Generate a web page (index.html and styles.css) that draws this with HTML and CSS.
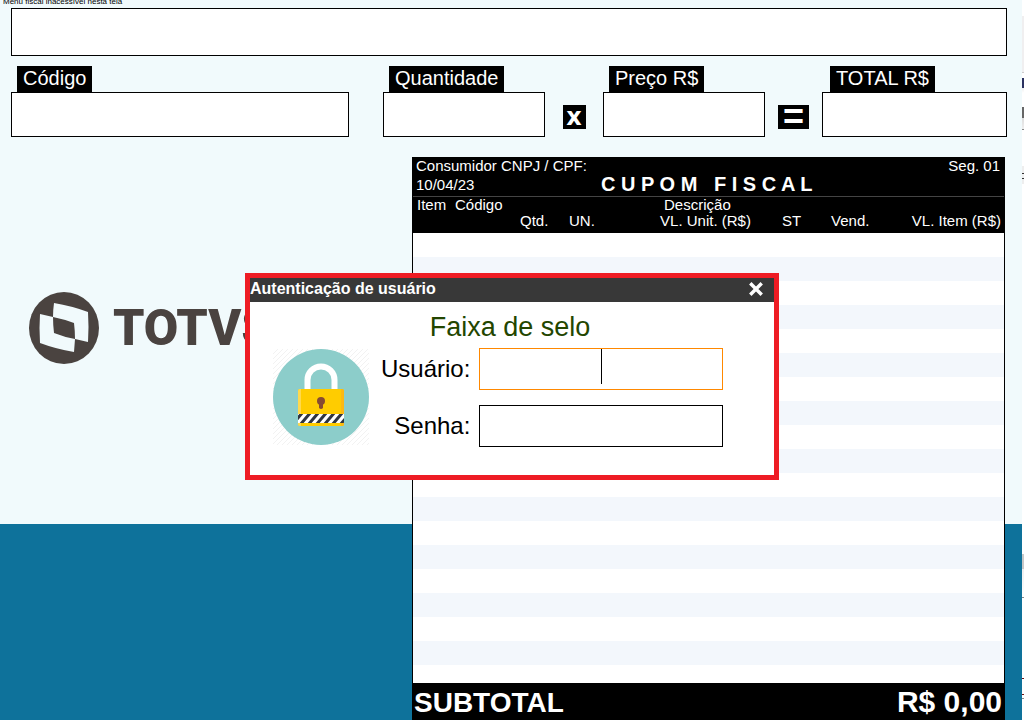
FILE: index.html
```html
<!DOCTYPE html>
<html lang="pt-BR">
<head>
  <meta charset="UTF-8" />
  <meta name="viewport" content="width=device-width, initial-scale=1.0"/>
  <title>TOTVS - Frente de Caixa</title>
  <link rel="stylesheet" href="styles.css">
</head>
<body>
  <div class="pos">
    <div class="menu-status"><span>Menu fiscal inacessível nesta tela</span></div>

    <main class="content">
      <input class="box description" type="text" aria-label="Descrição do produto" />

      <div class="fields">
        <div class="field field-code">
          <label for="codigo">Código</label>
          <input class="box" type="text" id="codigo" />
        </div>
        <div class="field">
          <label for="quantidade">Quantidade</label>
          <input class="box" type="text" id="quantidade" />
        </div>
        <div class="operator"><span class="times">x</span></div>
        <div class="field">
          <label for="preco">Preço R$</label>
          <input class="box" type="text" id="preco" />
        </div>
        <div class="operator"><span class="equals">=</span></div>
        <div class="field field-total">
          <label for="total">TOTAL R$</label>
          <input class="box" type="text" id="total" />
        </div>
      </div>

      <div class="workspace">
        <div class="brand">
          <svg class="brand-mark" viewBox="0 0 70 72" aria-hidden="true">
            <ellipse cx="35" cy="36" rx="35" ry="36" fill="#4a4340"/>
            <path d="M25 11Q43 14 59 20Q60 35 59 50L46 47Q46 39 45 31Q34 27 24 25Q24 18 25 11Z" fill="#f1fafc"/>
            <path d="M11 22L24 25Q24 33 25 41Q35 45 46 47L45 60Q27 57 11 51Q10 36 11 22Z" fill="#f1fafc"/>
          </svg>
          <span class="brand-name">TOTVS</span>
        </div>

        <section class="receipt">
          <header class="receipt-head">
            <div class="receipt-line">
              <span>Consumidor CNPJ / CPF:</span>
              <span>Seg. 01</span>
            </div>
            <div class="receipt-title">
              <span>10/04/23</span>
              <h2>C U P O M   F I S C A L</h2>
            </div>
          </header>
          <table class="items">
            <colgroup>
              <col class="c-item"><col class="c-code"><col class="c-qty"><col class="c-unit">
              <col class="c-price"><col class="c-st"><col class="c-seller"><col>
            </colgroup>
            <thead>
              <tr>
                <th>Item</th>
                <th colspan="3">Código</th>
                <th colspan="4" class="desc">Descrição</th>
              </tr>
              <tr>
                <th></th>
                <th></th>
                <th>Qtd.</th>
                <th>UN.</th>
                <th>VL. Unit. (R$)</th>
                <th>ST</th>
                <th>Vend.</th>
                <th class="right">VL. Item (R$)</th>
              </tr>
            </thead>
          </table>
          <div class="rows"></div>
          <footer class="subtotal">
            <span>SUBTOTAL</span>
            <strong>R$ 0,00</strong>
          </footer>
        </section>
      </div>
    </main>
  </div>

  <div class="overlay">
    <div class="login" role="dialog" aria-labelledby="loginTitle">
      <div class="login-bar">
        <h1 id="loginTitle">Autenticação de usuário</h1>
        <button type="button" class="close" aria-label="Fechar">
          <svg viewBox="0 0 14 14" aria-hidden="true">
            <path d="M2 2L12 12M12 2L2 12" stroke="#fff" stroke-width="3"/>
          </svg>
        </button>
      </div>
      <p class="login-message">Faixa de selo</p>
      <form class="login-form">
        <svg class="lock" viewBox="0 0 96 96" aria-hidden="true">
          <defs>
            <pattern id="hatch" width="5" height="5" patternUnits="userSpaceOnUse">
              <path d="M-1 6L6 -1" stroke="#f2f2f2"/>
            </pattern>
            <clipPath id="band"><rect x="25" y="65" width="46" height="9"/></clipPath>
          </defs>
          <rect width="96" height="96" fill="url(#hatch)"/>
          <circle cx="48" cy="48" r="48" fill="#8ccdca"/>
          <path d="M34.500 42V31a13.500 13.500 0 0 1 27 0V42" fill="none" stroke="#fff" stroke-width="6"/>
          <rect x="25" y="40" width="46" height="37" rx="2" fill="#fc0"/>
          <path d="M25 42q0 -2 2 -2h1v37h-1q-2 0 -2 -2z" fill="#ffd94d"/>
          <path d="M68 40h1q2 0 2 2v33q0 2 -2 2h-1z" fill="#fdb813"/>
          <circle cx="48" cy="52" r="4" fill="#874b32"/>
          <path d="M46 53h4v6q-2 2 -4 0z" fill="#874b32"/>
          <g clip-path="url(#band)">
            <rect x="25" y="65" width="46" height="9" fill="#fff"/>
            <path d="M19 76L30 63M27 76L38 63M35 76L46 63M43 76L54 63M51 76L62 63M59 76L70 63M67 76L78 63" stroke="#2f3440" stroke-width="3"/>
          </g>
        </svg>
        <div class="login-fields">
          <label for="usuario">Usuário:</label>
          <div class="input-wrap">
            <input class="box active" type="text" id="usuario" />
            <span class="caret"></span>
          </div>
          <label for="senha">Senha:</label>
          <div class="input-wrap">
            <input class="box" type="password" id="senha" />
          </div>
        </div>
      </form>
    </div>
  </div>
</body>
</html>
```

FILE: styles.css
```css
* {
  box-sizing: border-box;
}

body {
  margin: 0;
  font-family: "Liberation Sans", Arial, sans-serif;
  color: #000;
  /* edge of the window behind the till */
  background: linear-gradient(#fff 16px, #f0eff0 16px, #f0eff0 72px, #ccc 72px, #ccc 73px, #fff 73px, #fff 78px, #2b3160 78px, #2b3160 88px, #eee 88px, #fff 93px, #fff 107px, #666 107px, #666 118px, #ddd 118px, #eee 129px, #888 129px, #888 130px, #fff 130px, #fff 166px, #eee 166px, #eee 173px, #333 173px, #333 174px, #eee 174px, #eee 178px, #333 178px, #333 179px, #eee 179px, #eee 184px, #fff 184px, #fff 554px, #c8c8c8 554px, #c8c8c8 569px, #eee 569px, #fff 597px, #888 597px, #888 598px, #fff 598px, #fff 678px, #701010 678px, #701010 679px, #fff 679px, #fff 694px, #701010 694px, #701010 695px, #fff 695px, #fff 698px, #888 698px, #888 699px, #fff 699px);
}

h1, h2, p {
  margin: 0;
}

.pos {
  display: flex;
  flex-direction: column;
  height: 100vh;
  min-height: 600px;
  margin-right: 2px;
  background: linear-gradient(#f1fafc 524px, #0e729b 524px);
}

.menu-status {
  display: flex;
  align-items: flex-end;
  height: 8px;
  padding: 0 3px 1px;
  font-size: 8px;
  line-height: 10px;
}

.content {
  flex: 1;
  display: flex;
  flex-direction: column;
  padding: 0 15px 0 11px;
}

.box {
  display: block;
  width: 100%;
  height: 45px;
  padding: 0 8px;
  border: 1px solid #000;
  border-radius: 0;
  background: #fff;
  font-family: inherit;
  font-size: 24px;
  outline: none;
}

.description {
  height: 48px;
}

.fields {
  display: grid;
  grid-template-columns: 372fr 162fr 58px 162fr 57px 185fr;
  margin-top: 10px;
}

.field-code {
  padding-right: 34px;
}

.field label {
  display: block;
  width: fit-content;
  margin-left: 6px;
  padding: 0 6px 2px;
  background: #000;
  color: #fff;
  font-size: 20px;
  line-height: 24px;
  white-space: nowrap;
}

.field-total label {
  margin-left: 8px;
}

.operator {
  display: flex;
  justify-content: center;
  align-items: flex-end;
  padding-bottom: 8px;
}

.operator span {
  height: 24px;
  background: #000;
  color: #fff;
  font-weight: bold;
  text-align: center;
  line-height: 24px;
}

.times {
  width: 23px;
  font-family: "DejaVu Sans", sans-serif;
  font-size: 24px;
}

.equals {
  width: 31px;
  font-size: 36px;
}

.workspace {
  flex: 1;
  display: grid;
  grid-template-columns: 401fr 593fr;
  margin: 20px 2px 0 0;
}

.brand {
  display: flex;
  align-items: center;
  gap: 14px;
  height: 72px;
  margin: 135px 0 0 18px;
}

.brand-mark {
  width: 70px;
  height: 72px;
}

.brand-name {
  color: #4a4340;
  font-family: Roboto, sans-serif;
  font-size: 50px;
  font-weight: 900;
  line-height: 72px;
}

.receipt {
  display: flex;
  flex-direction: column;
  min-width: 0;
  border: solid #000;
  border-width: 1px 1px 0;
  background: #fff;
}

.receipt-head {
  padding: 0 4px 0 3px;
  background: #000;
  color: #fff;
  font-size: 15px;
  border-bottom: 1px solid #444;
}

.receipt-line {
  display: flex;
  justify-content: space-between;
  line-height: 16px;
}

.receipt-title {
  display: grid;
  grid-template-columns: 185px 1fr;
  align-items: center;
  line-height: 22px;
}

.receipt-title h2 {
  padding-bottom: 2px;
  font-size: 20px;
  line-height: 20px;
  white-space: pre;
}

.items {
  width: 100%;
  table-layout: fixed;
  border-collapse: collapse;
  border-bottom: 4px solid #000;
  background: #000;
  color: #fff;
  font-size: 15px;
}

.items th {
  padding: 0 0 0 4px;
  font-weight: normal;
  line-height: 16px;
  text-align: left;
  white-space: nowrap;
}

.items .desc {
  padding-left: 8px;
}

.items .right {
  padding-right: 3px;
  text-align: right;
}

.c-item {
  width: 38px;
}

.c-code {
  width: 65px;
}

.c-qty {
  width: 49px;
}

.c-unit {
  width: 91px;
}

.c-price {
  width: 122px;
}

.c-st {
  width: 49px;
}

.c-seller {
  width: 70px;
}

.rows {
  flex: 1;
  background: repeating-linear-gradient(#fff 0, #fff 24px, #f3f7fc 24px, #f3f7fc 48px);
}

.subtotal {
  display: flex;
  justify-content: space-between;
  align-items: baseline;
  height: 37px;
  padding: 0 2px 0 1px;
  background: #000;
  color: #fff;
  font-size: 28px;
  font-weight: bold;
  line-height: 38px;
}

.subtotal strong {
  font-size: 30px;
}

.overlay {
  position: absolute;
  top: 273px;
  left: 0;
  right: 0;
  display: flex;
  justify-content: center;
}

.login {
  width: 534px;
  border: 5px solid #ee1c24;
  background: #fff;
}

.login-bar {
  display: flex;
  justify-content: space-between;
  background: #383838;
  color: #fff;
}

.login-bar h1 {
  font-size: 16px;
  line-height: 22px;
}

.close {
  width: 36px;
  height: 24px;
  padding: 0 0 2px;
  border: none;
  background: none;
  cursor: pointer;
}

.close svg {
  display: block;
  width: 16px;
  height: 16px;
  margin: 0 auto;
}

.login-message {
  padding: 4px 4px 0 0;
  color: #234600;
  font-size: 27px;
  line-height: 42px;
  text-align: center;
}

.login-form {
  display: flex;
  gap: 12px;
  padding: 0 53px 28px 23px;
}

.lock {
  flex: none;
  width: 96px;
  height: 96px;
  margin-top: 1px;
}

.login-fields {
  flex: 1;
  display: grid;
  grid-template-columns: 1fr 244px;
  align-items: center;
  gap: 15px 9px;
}

.login-fields label {
  font-size: 24px;
  text-align: right;
}

.input-wrap {
  position: relative;
}

.input-wrap .box {
  height: 42px;
  text-align: center;
}

.input-wrap .active {
  border-color: #f80;
}

.caret {
  position: absolute;
  top: 1px;
  left: 50%;
  width: 1px;
  height: 35px;
  background: #000;
}
```
